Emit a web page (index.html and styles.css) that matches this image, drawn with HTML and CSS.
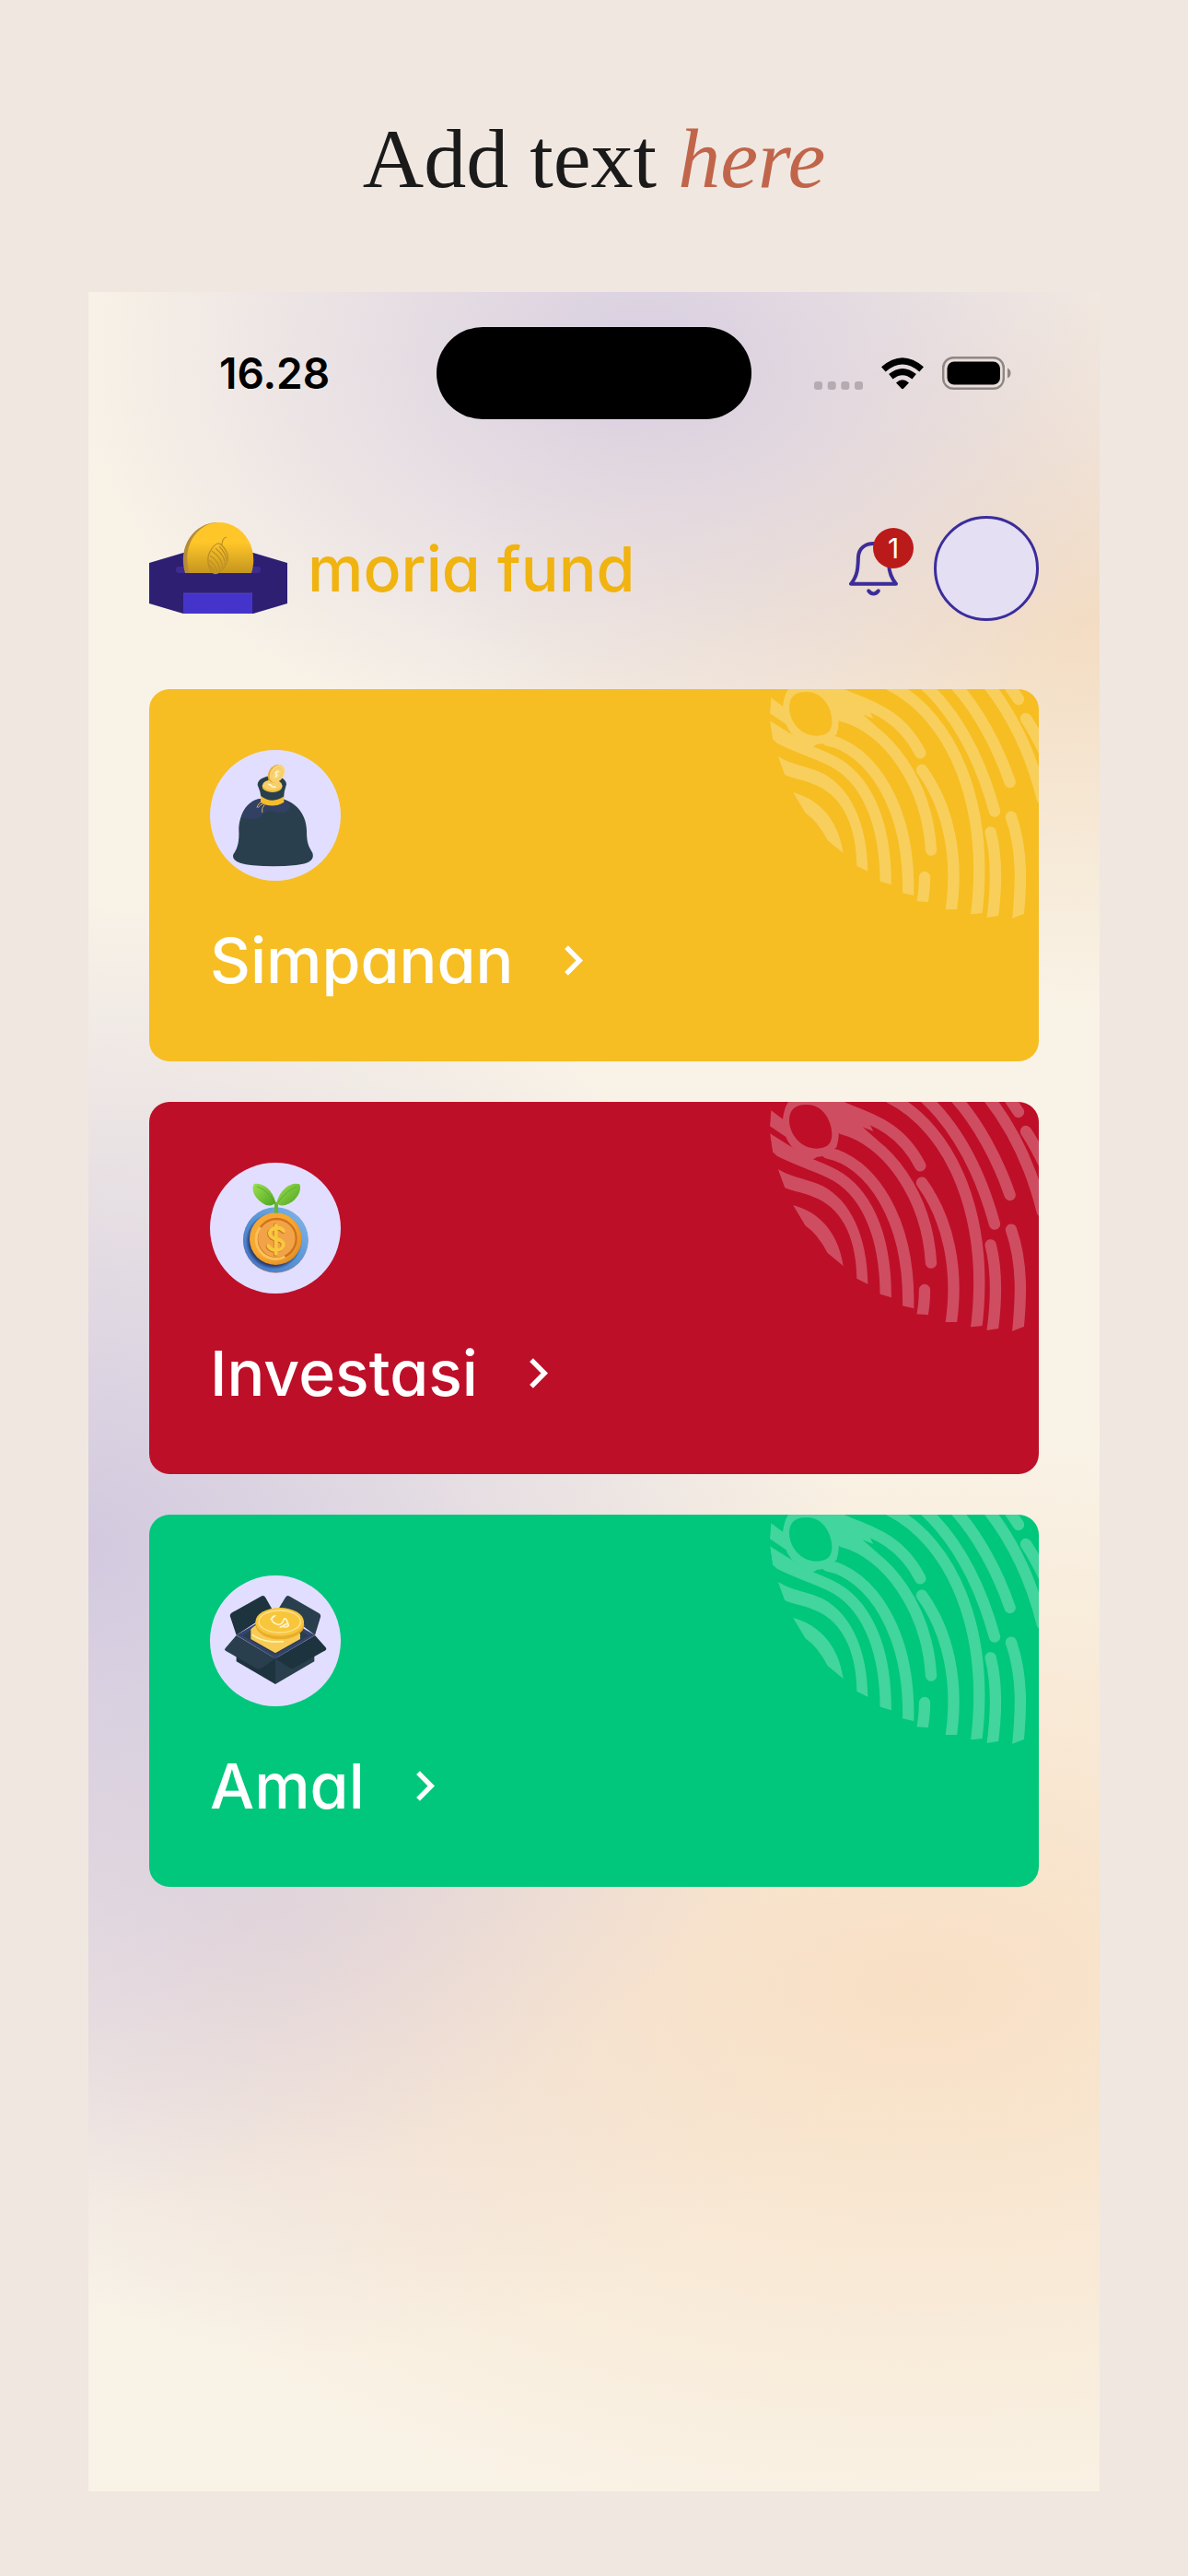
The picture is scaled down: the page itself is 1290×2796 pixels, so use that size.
FILE: index.html
```html
<!DOCTYPE html>
<html lang="id">
<head>
    <meta charset="UTF-8">
    <meta name="viewport" content="width=device-width, initial-scale=1.0">
    <title>moria fund</title>
    <link rel="stylesheet" href="styles.css">
</head>
<body>
    <svg class="defs" aria-hidden="true">
        <clipPath id="print-edge">
            <path d="M52 52 48 103V127L57 188 74 243 96 303 123 360 163 427 236 517 287 559 331 600 367 618 408 650 441 660 480 688 516 696 525 715 560 717 620 741H656L705 757 741 753 753 768 793 762 836 771 877 755 924 740V24H52Z"/>
        </clipPath>
        <symbol id="fingerprint" viewBox="45 24 879 750">
            <g clip-path="url(#print-edge)" fill="none" stroke="#fff" stroke-width="37" stroke-linecap="round">
                <g fill="#fff" stroke="none">
                    <path d="M123 360C200 380 270 440 287 559L236 517Q205 455 163 427Z"/>
                    <path d="M74 243C130 275 165 272 220 298C310 345 365 460 367 618L331 600C330 480 290 380 205 340C160 318 130 318 96 303Z"/>
                    <path d="M50 50 90 80 100 138 48 103Z"/>
                    <path d="M48 127 120 172 200 205 150 232 57 188Z"/>
                    <path fill-rule="evenodd" d="M108 24H290L350 50 385 120 350 106 400 150 273 122Q272 150 265 172L225 200 185 206 120 172Q85 125 90 80 94 45 108 24ZM165 33C130 33 111 50 111 85C111 125 145 176 200 176C235 176 250 160 250 130C250 85 220 30 165 33Z"/>
                </g>
                <path d="M80 184C140 215 190 228 245 255C350 305 430 440 425 680"/>
                <path d="M235 190C370 215 510 400 498 710"/>
                <path d="M285 112C430 150 560 330 573 548"/>
                <path d="M300 50C400 85 480 120 538 232"/>
                <path d="M435 8C640 110 770 400 718 780"/>
                <path d="M550 8C650 100 730 240 780 422"/>
                <path d="M650 8C725 90 790 210 830 327"/>
                <path d="M755 4C840 110 900 240 935 380"/>
                <path d="M825 8 858 57"/>
                <path d="M882 120Q912 165 940 225"/>
                <path d="M543 287C625 400 670 570 634 770"/>
                <path d="M552 636Q552 690 540 740"/>
                <path d="M767 490C790 580 785 690 770 790"/>
                <path d="M834 440C872 550 868 660 853 800"/>
            </g>
        </symbol>
    </svg>

    <h1 class="headline">Add text <em>here</em></h1>

    <main class="phone">
        <div class="status-bar">
            <span class="time">16.28</span>
            <span class="island"></span>
            <div class="indicators">
                <svg class="dots" viewBox="0 0 53 9" fill="#b5abb0">
                    <rect width="9" height="9" rx="3"/>
                    <rect x="14.7" width="9" height="9" rx="3"/>
                    <rect x="29.3" width="9" height="9" rx="3"/>
                    <rect x="44" width="9" height="9" rx="3"/>
                </svg>
                <svg class="wifi" viewBox="0 0 138 104">
                    <g fill="none" stroke="#000" stroke-width="21">
                        <path d="M7 38Q69-16 131 38"/>
                        <path d="M31 62Q69 31 107 62"/>
                    </g>
                    <path d="M48 82Q69 63 90 82L73 100Q69 104 65 100Z"/>
                </svg>
                <svg class="battery" viewBox="0 0 75 36">
                    <rect x="1.2" y="1.2" width="65.6" height="33.6" rx="11" fill="none" stroke="#8f8783" stroke-width="2.4"/>
                    <rect x="5.5" y="5.5" width="57.5" height="25" rx="7.5"/>
                    <path d="M71 12.5Q74.500 14 74.500 18T71 23.500Z" fill="#8f8783"/>
                </svg>
            </div>
        </div>

        <header class="header">
            <a href="#" class="brand">
                <svg class="logo" viewBox="0 0 150 100">
                    <defs>
                        <linearGradient id="gold" x1="0" y1="0" x2="0" y2="1">
                            <stop offset="0.4" stop-color="#ffc629"/>
                            <stop offset="1" stop-color="#c4951f"/>
                        </linearGradient>
                    </defs>
                    <path d="M0 44 37 33H113L150 44V88L113 99H37L0 88Z" fill="#2e1f73"/>
                    <rect x="29" y="48" width="92" height="7" rx="3" fill="#3d2b8f"/>
                    <path d="M39 55C30 25 50 0 74 0V55Z" fill="#b68c38"/>
                    <path d="M44 55C34 27 52 0 76 0C101 0 120 27 111 55Z" fill="url(#gold)"/>
                    <g fill="none" stroke="#bb8f26" stroke-width="1.200">
                        <path d="M84 16Q79 17 79 25Q90 37 82 48T68 54Q60 41 67 30T79 25"/>
                        <path d="M68 31Q80 39 80 51M72 28Q84 38 82 47M76 26Q84 34 84 42M66 36Q76 42 77 53M65 41Q72 46 74 54M65 46Q69 49 71 54"/>
                    </g>
                    <path d="M37 77H112V99H37Z" fill="#4534cc"/>
                    <path d="M37 77H112" stroke="#5a46b4"/>
                </svg>
                <span>moria fund</span>
            </a>
            <div class="actions">
                <button class="bell" aria-label="Notifikasi">
                    <svg viewBox="0 0 160 178" fill="none" stroke="#3d2d99" stroke-width="12" stroke-linecap="round" stroke-linejoin="round">
                        <path d="M6 138H154Q132 112 130 74V56C130 22 108 6 80 6S32 22 30 50C29 86 28 112 6 138Z"/>
                        <path d="M64 161Q80 180 96 161"/>
                    </svg>
                    <span class="badge">1</span>
                </button>
                <a href="#" class="avatar" aria-label="Profil"></a>
            </div>
        </header>

        <nav class="cards">
            <a href="#" class="card simpanan">
                <svg class="print"><use href="#fingerprint"/></svg>
                <span class="card-icon">
                    <svg viewBox="0 0 426 426">
                        <path d="M164 159C118 166 94 215 94 262C96 300 89 322 77 338C68 357 90 372 140 376Q213 382 280 375C330 370 340 355 334 335C320 314 315 300 315 262C314 214 285 174 238 160Z" fill="#293f4d"/>
                        <path d="M164 159C130 163 110 190 101 220C130 228 160 226 172 212C190 190 208 204 235 204Q258 206 262 180L238 162Z" fill="#324064"/>
                        <path d="M155 114C155 75 249 75 249 112Q241 135 240 157Q205 175 167 157Q165 135 155 114Z" fill="#293f4d"/>
                        <path d="M165 149Q202 178 241 151V170Q202 193 165 170Z" fill="#f5bd2c"/>
                        <path d="M168 171Q157 172 153 188M174 175Q162 179 157 188M178 178Q167 188 170 204" fill="none" stroke="#d7b45a" stroke-width="3"/>
                        <ellipse cx="203" cy="117" rx="33" ry="20" fill="#f7cf69"/>
                        <path d="M170 117Q202 145 235 119Q235 136 203 137Q170 135 170 117Z" fill="#efbd3d"/>
                        <ellipse cx="214" cy="77" rx="23" ry="32" transform="rotate(32 214 77)" fill="#e6ac35"/>
                        <ellipse cx="219" cy="77" rx="22" ry="31" transform="rotate(32 219 77)" fill="#f9d473"/>
                        <ellipse cx="218" cy="79" rx="14" ry="23" transform="rotate(32 218 79)" fill="none" stroke="#eec25e" stroke-width="2"/>
                        <path d="M224 70Q210 72 216 79T212 87M190 113Q198 111 200 117T214 119" fill="none" stroke="#fff6d0" stroke-width="5"/>
                    </svg>
                </span>
                <span class="card-title">Simpanan
                    <svg class="chevron" viewBox="0 0 60 98"><path d="M6 6 49 49 6 92"/></svg>
                </span>
            </a>

            <a href="#" class="card investasi">
                <svg class="print"><use href="#fingerprint"/></svg>
                <span class="card-icon">
                    <svg viewBox="0 0 426 426">
                        <defs>
                            <linearGradient id="leaf" x1="0" y1="0" x2="1" y2="1">
                                <stop offset="0" stop-color="#9be052"/>
                                <stop offset="1" stop-color="#4fa51f"/>
                            </linearGradient>
                            <linearGradient id="rim" x1="1" y1="0" x2="0" y2="1">
                                <stop offset="0" stop-color="#86b9e8"/>
                                <stop offset="0.5" stop-color="#5795d8"/>
                                <stop offset="1" stop-color="#426fc0"/>
                            </linearGradient>
                            <radialGradient id="coin" cx="0.4" cy="0.4" r="0.650">
                                <stop offset="0" stop-color="#f6a54a"/>
                                <stop offset="0.7" stop-color="#f7a92d"/>
                                <stop offset="1" stop-color="#e08d25"/>
                            </radialGradient>
                            <radialGradient id="shade">
                                <stop offset="0.86" stop-color="#2c3c70"/>
                                <stop offset="1" stop-color="#2c3c70" stop-opacity="0"/>
                            </radialGradient>
                        </defs>
                        <circle cx="214" cy="253" r="106" fill="#a78787"/>
                        <circle cx="214" cy="251" r="106" fill="url(#rim)"/>
                        <circle cx="208" cy="255" r="92" fill="url(#shade)"/>
                        <circle cx="214" cy="248" r="85" fill="url(#coin)"/>
                        <circle cx="217" cy="247" r="64" fill="#f2a348" stroke="#d0721d" stroke-width="7"/>
                        <path d="M164 210A64 64 0 0 0 244 306" fill="none" stroke="#fac15c" stroke-width="9"/>
                        <path d="M238 224Q224 209 206 216C184 226 192 246 214 250C247 256 242 286 214 287Q196 286 188 273M213 203V298" fill="none" stroke="#c8741e" stroke-width="13" stroke-linecap="round"/>
                        <path d="M240 222Q226 207 208 214C186 224 194 244 216 248C249 254 244 284 216 285Q198 284 190 271M215 204V296" fill="none" stroke="#f8c83e" stroke-width="12" stroke-linecap="round"/>
                        <path d="M216 128V164" stroke="#66b82b" stroke-width="12"/>
                        <path d="M214 130C202 82 168 65 144 69C132 84 144 120 182 138Q205 143 214 130Z" fill="url(#leaf)"/>
                        <path d="M217 131C228 84 266 61 292 70C300 91 284 120 258 133Q230 147 217 131Z" fill="url(#leaf)"/>
                        <path d="M152 77Q185 88 211 128M282 78Q248 92 221 129" fill="none" stroke="#4da126" stroke-width="2"/>
                    </svg>
                </span>
                <span class="card-title">Investasi
                    <svg class="chevron" viewBox="0 0 60 98"><path d="M6 6 49 49 6 92"/></svg>
                </span>
            </a>

            <a href="#" class="card amal">
                <svg class="print"><use href="#fingerprint"/></svg>
                <span class="card-icon">
                    <svg viewBox="0 0 426 426">
                        <path d="M66 134Q63 126 72 121L166 68Q176 63 181 72L206 116 86 194Z" fill="#1d333e"/>
                        <path d="M225 106 246 71Q251 63 260 68L355 123Q362 127 360 136L342 194Z" fill="#293f4d"/>
                        <path d="M86 194 213 120 342 194 213 271Z" fill="#35436c"/>
                        <path d="M106 196 213 133 322 196 213 259Z" fill="#293f4d"/>
                        <path d="M86 230 213 270V354L86 280Z" fill="#1d333e"/>
                        <path d="M340 230 213 270V354L340 280Z" fill="#293f4d"/>
                        <path d="M133 175Q150 150 210 155L294 190V207L213 253 133 207Z" fill="#f7cb55"/>
                        <path d="M137 193Q180 222 240 215" fill="none" stroke="#fff0ac" stroke-width="5"/>
                        <ellipse cx="228" cy="162" rx="79" ry="46" fill="#e9ad29"/>
                        <ellipse cx="227" cy="151" rx="79" ry="46" fill="#f8c63d"/>
                        <ellipse cx="227" cy="150" rx="68" ry="36" fill="none" stroke="#ffe392" stroke-width="4"/>
                        <path d="M206 133Q194 148 213 157T239 147 256 163Q249 171 235 166M199 141 212 131M229 169 251 157" fill="none" stroke="#fff4c8" stroke-width="5" stroke-linecap="round"/>
                        <path d="M86 195 213 271 170 301Q160 307 151 302L52 246Q46 242 50 237Z" fill="#293f4d"/>
                        <path d="M342 195 213 271 258 300Q266 305 275 301L376 244Q382 240 376 233Z" fill="#1d333e"/>
                    </svg>
                </span>
                <span class="card-title">Amal
                    <svg class="chevron" viewBox="0 0 60 98"><path d="M6 6 49 49 6 92"/></svg>
                </span>
            </a>
        </nav>
    </main>
</body>
</html>
```
FILE: styles.css
```css
* {
    box-sizing: border-box;
}

body {
    font-family: Inter, 'Open Sans', sans-serif;
    background-color: #f0e7e1;
    margin: 0;
    padding: 0 96px 92px;
    min-height: 100vh;
    display: flex;
    flex-direction: column;
}

a {
    color: inherit;
    text-decoration: none;
}

svg {
    display: block;
}

.defs {
    position: absolute;
    width: 0;
    height: 0;
}

.headline {
    font-family: 'Liberation Serif', serif;
    font-size: 92px;
    font-weight: 400;
    line-height: 120px;
    text-align: center;
    color: #1a1a1a;
    margin: 0;
    padding: 112px 0 85px;
}

.headline em {
    color: #c1654a;
}

.phone {
    flex: 1;
    padding: 38px 66px;
    background:
        radial-gradient(ellipse 58% 19% at 55% 3%, #d8cee0, rgba(216, 206, 224, 0)),
        radial-gradient(ellipse 65% 18% at 100% 15%, #f3dcc2, rgba(243, 220, 194, 0)),
        radial-gradient(ellipse 75% 30% at 0% 57%, #d2c9df, rgba(210, 201, 223, 0)),
        radial-gradient(ellipse 95% 26% at 82% 77%, #f8dfc4, rgba(248, 223, 196, 0)),
        radial-gradient(ellipse 60% 20% at 20% 74%, #e4dae2, rgba(228, 218, 226, 0)),
        #f9f3e7;
}

.status-bar {
    display: grid;
    grid-template-columns: 1fr 342px 1fr;
    align-items: center;
    margin-bottom: 105px;
}

.time {
    padding-left: 76px;
    font-size: 46px;
    font-weight: 600;
}

.island {
    height: 100px;
    border-radius: 50px;
    background-color: #000;
}

.indicators {
    display: flex;
    justify-content: flex-end;
    align-items: flex-end;
    gap: 20px;
    padding-right: 30px;
}

.dots {
    width: 53px;
    height: 9px;
}

.wifi {
    width: 46px;
    height: 35px;
}

.battery {
    width: 75px;
    height: 36px;
}

.header {
    display: flex;
    justify-content: space-between;
    align-items: center;
    margin-bottom: 74px;
}

.brand {
    display: flex;
    align-items: center;
    gap: 22px;
    font-size: 68px;
    font-weight: 500;
    line-height: 88px;
    color: #f0b310;
    font-feature-settings: "cv11";
}

.logo {
    width: 150px;
    height: 100px;
}

.actions {
    display: flex;
    align-items: center;
    gap: 39px;
}

.bell {
    position: relative;
    padding: 0;
    border: none;
    background: none;
    font: inherit;
}

.bell svg {
    width: 53px;
    height: 59px;
}

.badge {
    position: absolute;
    top: -15px;
    right: -17px;
    width: 44px;
    height: 44px;
    border-radius: 50%;
    background-color: #bb1a1a;
    color: white;
    font-size: 30px;
    line-height: 44px;
    text-align: center;
}

.avatar {
    width: 114px;
    height: 114px;
    border: 3px solid #3b2d9b;
    border-radius: 50%;
    background-color: #e4dff3;
}

.cards {
    display: flex;
    flex-direction: column;
    gap: 44px;
}

.card {
    position: relative;
    display: flex;
    flex-direction: column;
    gap: 42px;
    padding: 66px;
    border-radius: 22px;
    overflow: hidden;
    color: white;
}

.simpanan {
    background-color: #f6be23;
}

.investasi {
    background-color: #be0f29;
}

.amal {
    background-color: #00c77b;
}

.print {
    position: absolute;
    top: 0;
    right: 0;
    width: 293px;
    height: 250px;
    opacity: 0.26;
}

.card-icon {
    width: 142px;
    height: 142px;
    border-radius: 50%;
    background-color: #e2deff;
}

.card-title {
    display: flex;
    align-items: center;
    gap: 56px;
    font-size: 68px;
    font-weight: 500;
    line-height: 88px;
    font-feature-settings: "cv11";
}

.chevron {
    width: 20px;
    height: 33px;
    fill: none;
    stroke: white;
    stroke-width: 16px;
}
```
